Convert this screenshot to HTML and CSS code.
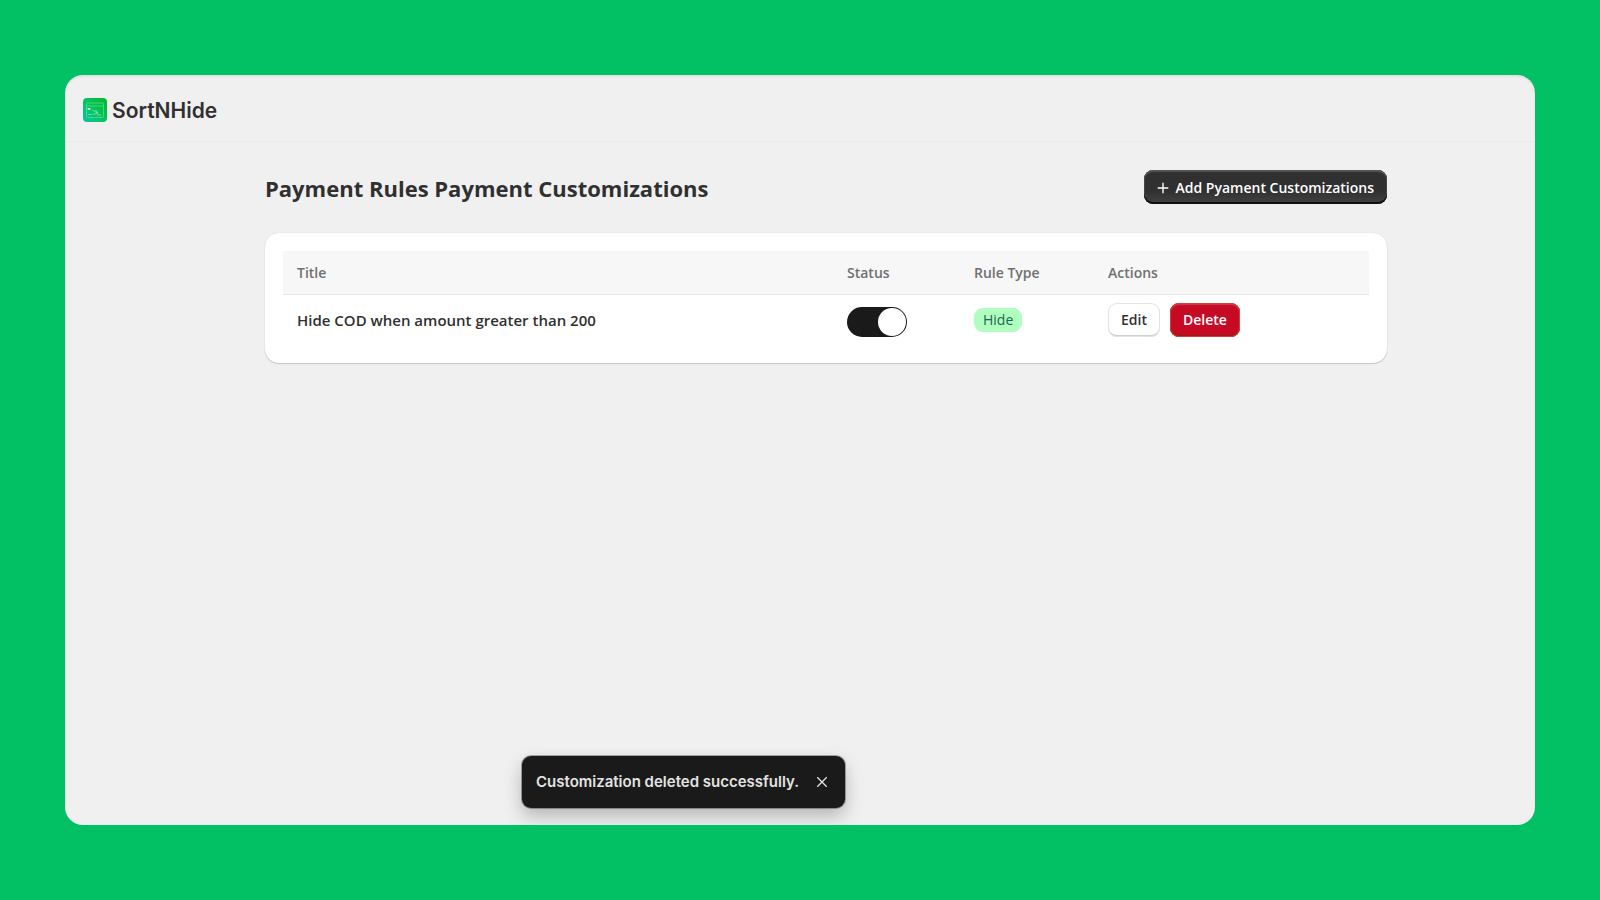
FILE: index.html
```
<!DOCTYPE html>
<html lang="en">
<head>
  <meta charset="UTF-8">
  <meta name="viewport" content="width=device-width, initial-scale=1.0">
  <title>SortNHide</title>
  <link rel="stylesheet" href="styles.css">
</head>
<body>

<div class="window">
  <header class="topbar">
    <svg class="logo" viewBox="0 0 24 24" aria-hidden="true">
      <defs>
        <linearGradient id="logoFill" x1="0" y1="1" x2="1" y2="0">
          <stop offset="0" stop-color="#06c4a4"/>
          <stop offset="0.5" stop-color="#05c45c"/>
          <stop offset="1" stop-color="#02b828"/>
        </linearGradient>
      </defs>
      <rect width="24" height="24" rx="4" fill="url(#logoFill)"/>
      <g fill="none" stroke="#5fe08f" stroke-width="0.7">
        <rect x="3.5" y="5" width="17" height="14.5" rx="1"/>
        <path d="M3.5 8h17"/>
        <path d="M9 12l6 3-5 1.500M12.500 12l2.500 3M5 16.500h4M14 17h4" stroke="#8ff0b4"/>
      </g>
      <rect x="4.500" y="10" width="3" height="1.800" rx="0.800" fill="#d8ffe8"/>
    </svg>
    <span class="brand">SortNHide</span>
  </header>

  <main class="page">
    <div class="page-header">
      <h1>Payment Rules Payment Customizations</h1>
      <button type="button" class="btn btn-primary">
        <svg class="plus" viewBox="0 0 12 12" aria-hidden="true">
          <path d="M6 0.700v10.600M0.700 6h10.600"/>
        </svg>
        Add Pyament Customizations
      </button>
    </div>

    <section class="card">
      <table class="rules">
        <thead>
          <tr>
            <th class="col-title">Title</th>
            <th class="col-status">Status</th>
            <th class="col-type">Rule Type</th>
            <th>Actions</th>
          </tr>
        </thead>
        <tbody>
          <tr>
            <td class="rule-title">Hide COD when amount greater than 200</td>
            <td><input type="checkbox" class="switch" aria-label="Status" checked></td>
            <td><span class="badge">Hide</span></td>
            <td>
              <div class="actions">
                <button type="button" class="btn btn-plain">Edit</button>
                <button type="button" class="btn btn-danger">Delete</button>
              </div>
            </td>
          </tr>
        </tbody>
      </table>
    </section>
  </main>

  <div class="toast" role="status">
    <span>Customization deleted successfully.</span>
    <button type="button" class="toast-close" aria-label="Close">
      <svg viewBox="0 0 12 12" aria-hidden="true"><path d="M1.300 1.300l9.400 9.400M10.700 1.300l-9.400 9.400"/></svg>
    </button>
  </div>
</div>

</body>
</html>
```

FILE: styles.css
```
* {
  box-sizing: border-box;
}
body {
  margin: 0;
  min-height: 100vh;
  padding: 75px 65px;
  display: flex;
  background-color: #02c064;
  color: #303030;
  font-family: "Open Sans", "Noto Sans", sans-serif;
  font-size: 14px;
  line-height: 20px;
}
.window {
  position: relative;
  flex: 1;
  background-color: #f0f0f0;
  border-radius: 18px;
  overflow: hidden;
  box-shadow: inset 0 2px 2px rgba(0, 0, 0, 0.06);
}
.topbar {
  display: flex;
  align-items: center;
  gap: 5px;
  height: 67px;
  padding: 4px 18px 0;
  border-bottom: 1px solid #ebebeb;
}
.logo {
  width: 24px;
  height: 24px;
}
.brand {
  padding-top: 2px;
  font-family: Inter, sans-serif;
  font-size: 21px;
  font-weight: 600;
}
.page {
  padding: 28px 148px 0 200px;
}
.page-header {
  display: flex;
  justify-content: space-between;
  align-items: center;
  margin-bottom: 29px;
}
h1 {
  margin: 0;
  padding-top: 2px;
  font-size: 22px;
  font-weight: 700;
  line-height: 32px;
}
.btn {
  display: flex;
  align-items: center;
  height: 34px;
  padding: 1px 13px 0;
  border: none;
  border-radius: 9px;
  font-family: inherit;
  font-size: 14px;
  font-weight: 600;
  line-height: 20px;
  cursor: pointer;
}
.btn-primary {
  gap: 7px;
  background: linear-gradient(#303030 60%, #424242);
  color: #fff;
  box-shadow: inset 0 2px 1px #555, inset 0 -2px 0 #111, inset 1px 0 0 #444, inset -1px 0 0 #444;
}
.plus {
  width: 12px;
  height: 12px;
  stroke: #fff;
  stroke-width: 1.4;
}
.card {
  padding: 18px;
  background-color: #fff;
  border-radius: 14px;
  box-shadow: 0 1px 1px rgba(0, 0, 0, 0.16), 0 0 1px rgba(0, 0, 0, 0.2);
}
.rules {
  width: 100%;
  table-layout: fixed;
  border-collapse: collapse;
  text-align: left;
}
.rules th {
  height: 43px;
  padding: 1px 14px 0;
  background-color: #f7f7f7;
  border-bottom: 1px solid #e6e6e6;
  color: #707070;
  font-weight: 600;
}
.rules td {
  height: 51px;
  padding: 0 14px;
}
.col-title {
  width: 550px;
}
.col-status {
  width: 127px;
}
.col-type {
  width: 134px;
}
.rules .rule-title {
  font-size: 15px;
  font-weight: 600;
}
.switch {
  appearance: none;
  display: block;
  width: 60px;
  height: 30px;
  margin: 5px 0 0;
  padding: 1px;
  border-radius: 15px;
  background-color: #1a1a1a;
  cursor: pointer;
}
.switch::before {
  content: "";
  display: block;
  width: 28px;
  height: 28px;
  border-radius: 50%;
  background-color: #fff;
}
.switch:checked::before {
  margin-left: auto;
}
.badge {
  display: inline-block;
  padding: 2px 9px;
  border-radius: 9px;
  background-color: #affebf;
  color: #1c6650;
}
.actions {
  display: flex;
  gap: 10px;
}
.btn-plain {
  background-color: #fff;
  color: #303030;
  box-shadow: inset 0 0 0 1px #e3e3e3, inset 0 -2px 0 #cfcfcf;
}
.btn-danger {
  background-color: #c70a24;
  color: #fff;
  box-shadow: inset 0 0 0 1px #c4473a, inset 0 2px 1px #cf3a4c, inset 0 -2px 1px #9a1a12;
}
.toast {
  position: absolute;
  left: 457px;
  bottom: 17px;
  display: flex;
  align-items: center;
  gap: 17px;
  height: 52px;
  padding: 0 17px 0 14px;
  border-radius: 9px;
  background-color: #1a1a1a;
  color: #e3e3e3;
  font-family: Inter, sans-serif;
  font-size: 15px;
  font-weight: 600;
  box-shadow: 0 0 0 1px rgba(0, 0, 0, 0.3), 0 8px 18px rgba(0, 0, 0, 0.25);
}
.toast-close {
  display: flex;
  padding: 0;
  border: none;
  background: none;
  cursor: pointer;
}
.toast-close svg {
  width: 12px;
  height: 12px;
  stroke: #e3e3e3;
  stroke-width: 1.3;
}
```
